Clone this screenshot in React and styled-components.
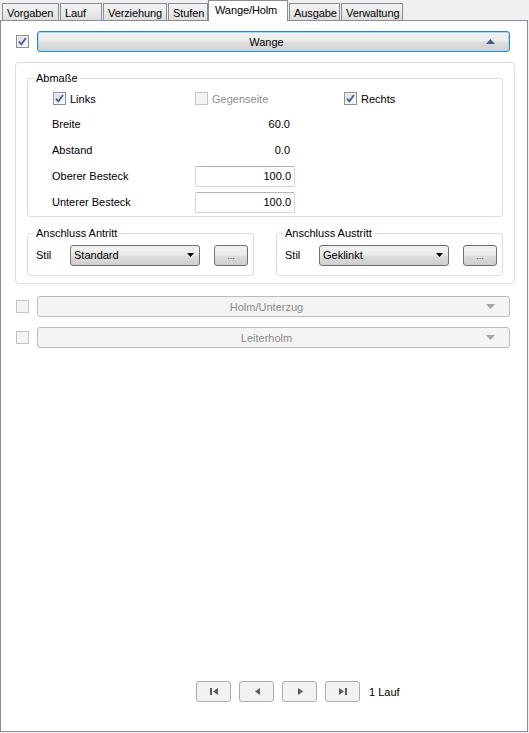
import React from "react";
import styled, { createGlobalStyle } from "styled-components";

const GlobalStyle = createGlobalStyle`
  html, body {
    margin: 0;
    padding: 0;
    background: #f0f0f0;
  }
  body {
    font-family: "Liberation Sans", Arial, sans-serif;
    font-size: 11px;
    color: #000;
  }
`;

const Window = styled.div`
  width: 529px;
  height: 733px;
  display: flex;
  flex-direction: column;
  background: #f0f0f0;
`;

const TabStrip = styled.div`
  display: flex;
  align-items: flex-end;
  height: 20px;
  padding-left: 2px;
  position: relative;
  z-index: 1;
`;

const Tab = styled.div`
  box-sizing: border-box;
  width: ${(p) => p.$w}px;
  height: ${(p) => (p.$active ? 21 : 17)}px;
  margin-left: ${(p) => (p.$gap ? 1 : 0)}px;
  margin-bottom: ${(p) => (p.$active ? -1 : 0)}px;
  border: 1px solid #898c95;
  border-bottom: none;
  background: ${(p) =>
    p.$active ? "#fff" : "linear-gradient(#f3f3f3 0%, #ebebeb 50%, #dedede 100%)"};
  display: flex;
  align-items: ${(p) => (p.$active ? "flex-start" : "center")};
  padding-top: ${(p) => (p.$active ? 3 : 1)}px;
  padding-left: ${(p) => (p.$active ? 6 : 4)}px;
  white-space: nowrap;
  overflow: hidden;
  font-size: 11px;
  letter-spacing: -0.1px;
`;

const Panel = styled.div`
  box-sizing: border-box;
  width: 528px;
  height: 712px;
  background: #fff;
  border: 1px solid #898c95;
  display: flex;
  flex-direction: column;
`;

const SectionRow = styled.div`
  display: flex;
  align-items: center;
  gap: 8px;
  margin: ${(p) => p.$top}px 17px 0 15px;
`;

const Box = styled.span`
  box-sizing: border-box;
  width: 13px;
  height: 13px;
  flex: none;
  border: 1px solid ${(p) => (p.$disabled ? "#c4c4c4" : "#8e8f8f")};
  background: ${(p) =>
    p.$disabled ? "#f4f4f4" : "linear-gradient(135deg, #d4d6da 0%, #f0f0f0 60%, #fbfbfb 100%)"};
  box-shadow: inset 0 0 0 1px #f4f4f4;
  display: flex;
  align-items: center;
  justify-content: center;
  margin-left: ${(p) => p.$ml || 0}px;
`;

const SectionButton = styled.div`
  box-sizing: border-box;
  flex: 1;
  height: 21px;
  border-radius: 3px;
  display: grid;
  grid-template-columns: 1fr auto 1fr;
  align-items: center;
  padding-right: 14px;
  border: 1px solid ${(p) => (p.$active ? "#3c7fb1" : "#b9bcbf")};
  background: ${(p) =>
    p.$active
      ? "linear-gradient(#f3f3f3 0%, #ececec 48%, #dedede 52%, #d2d2d2 100%)"
      : "#f4f4f4"};
  box-shadow: ${(p) => (p.$active ? "inset 0 0 0 1px #a3dcf8" : "none")};
  color: ${(p) => (p.$active ? "#000" : "#8a8a8a")};

  span {
    grid-column: 2;
  }
  svg {
    grid-column: 3;
    justify-self: end;
  }
`;

const Group = styled.div`
  box-sizing: border-box;
  width: 500px;
  margin: 10px 0 0 14px;
  border: 1px solid #d5dfe5;
  border-radius: 4px;
  padding: 9px 0 7px 11px;
`;

const Field = styled.fieldset`
  box-sizing: border-box;
  width: ${(p) => p.$w}px;
  margin: 0;
  padding: 0 0 ${(p) => p.$pb}px 0;
  border: 1px solid #d5dfe5;
  border-radius: 3px;
  min-width: 0;

  legend {
    margin-left: 6px;
    padding: 0 2px;
    line-height: 13px;
    font-size: 11px;
  }
`;

const MeasureGrid = styled.div`
  display: grid;
  grid-template-columns: 143px 149px 1fr;
  grid-auto-rows: 26px;
  align-items: center;
  padding-left: 24px;
`;

const Check = styled.label`
  display: flex;
  align-items: center;
  gap: 4px;
  padding-top: 1px;
  color: ${(p) => (p.$disabled ? "#8d8d8d" : "#000")};
`;

const Value = styled.div`
  width: 100px;
  text-align: right;
  padding-right: 5px;
  box-sizing: border-box;
`;

const NumInput = styled.input`
  box-sizing: border-box;
  width: 100px;
  height: 21px;
  border: 1px solid #d4d6db;
  border-top-color: #b2b5bc;
  border-radius: 2px;
  font: inherit;
  text-align: right;
  padding: 0 3px 0 0;
  color: #000;
  outline: none;
`;

const JoinRow = styled.div`
  display: flex;
  gap: 22px;
  margin-top: 10px;
`;

const StyleLine = styled.div`
  display: flex;
  align-items: center;
  height: 22px;
  padding: 4px 0 0 8px;
`;

const StyleLabel = styled.span`
  width: 34px;
  flex: none;
`;

const Combo = styled.div`
  box-sizing: border-box;
  width: 130px;
  height: 21px;
  border: 1px solid #707070;
  border-radius: 3px;
  background: linear-gradient(#f2f2f2 0%, #ebebeb 48%, #dddddd 52%, #cfcfcf 100%);
  display: flex;
  align-items: center;
  justify-content: space-between;
  padding: 0 5px 0 3px;
`;

const DotsButton = styled.div`
  box-sizing: border-box;
  width: 34px;
  height: 21px;
  margin-left: 14px;
  border: 1px solid #707070;
  border-radius: 3px;
  background: linear-gradient(#f2f2f2 0%, #ebebeb 48%, #dddddd 52%, #cfcfcf 100%);
  display: flex;
  align-items: center;
  justify-content: center;
  font-size: 9px;
  color: #333;
  padding-top: 1px;
`;

const Nav = styled.div`
  margin-top: auto;
  display: flex;
  align-items: center;
  gap: 8px;
  padding: 0 0 29px 195px;
`;

const NavButton = styled.div`
  box-sizing: border-box;
  width: 35px;
  height: 21px;
  border: 1px solid #adadad;
  border-radius: 3px;
  background: #f2f2f2;
  display: flex;
  align-items: center;
  justify-content: center;
`;

const NavLabel = styled.span`
  margin-left: 1px;
`;

const tabs = [
  { label: "Vorgaben", w: 57 },
  { label: "Lauf", w: 42 },
  { label: "Verziehung", w: 64 },
  { label: "Stufen", w: 40 },
  { label: "Wange/Holm", w: 80, active: true },
  { label: "Ausgabe", w: 51 },
  { label: "Verwaltung", w: 62 },
];

function CheckBox({ checked, disabled, ml }) {
  return (
    <Box $disabled={disabled} $ml={ml}>
      {checked && (
        <svg width="9" height="9" viewBox="0 0 9 9">
          <path d="M1 4.6 L3.4 7.4 L8 1" fill="none" stroke="#4b5d95" strokeWidth="1.8" />
        </svg>
      )}
    </Box>
  );
}

function Arrow({ up, color }) {
  return (
    <svg width="9" height="5" viewBox="0 0 9 5">
      <path d={up ? "M0 5 L4.5 0 L9 5 Z" : "M0 0 L9 0 L4.5 5 Z"} fill={color} />
    </svg>
  );
}

function Section({ title, top, active, checked }) {
  return (
    <SectionRow $top={top}>
      <CheckBox checked={checked} disabled={!active} />
      <SectionButton $active={active}>
        <span>{title}</span>
        <Arrow up={active} color={active ? "#3f5f86" : "#a5a5a5"} />
      </SectionButton>
    </SectionRow>
  );
}

function JoinBox({ legend, value }) {
  return (
    <Field $w={227} $pb={9}>
      <legend>{legend}</legend>
      <StyleLine>
        <StyleLabel>Stil</StyleLabel>
        <Combo>
          <span>{value}</span>
          <svg width="7" height="4" viewBox="0 0 7 4">
            <path d="M0 0 L7 0 L3.5 4 Z" fill="#000" />
          </svg>
        </Combo>
        <DotsButton>...</DotsButton>
      </StyleLine>
    </Field>
  );
}

const navIcons = [
  "M1 1 H3 V8 H1 Z M9 1 V8 L4 4.5 Z",
  "M8 1 V8 L3 4.5 Z",
  "M3 1 V8 L8 4.5 Z",
  "M1 1 V8 L6 4.5 Z M7 1 H9 V8 H7 Z",
];

export default function App() {
  return (
    <Window>
      <GlobalStyle />
      <TabStrip>
        {tabs.map((t, i) => (
          <Tab key={t.label} $w={t.w} $active={t.active} $gap={i > 0 && !t.active}>
            {t.label}
          </Tab>
        ))}
      </TabStrip>
      <Panel>
        <Section title="Wange" top={10} active checked />
        <Group>
          <Field $w={476} $pb={1}>
            <legend>Abmaße</legend>
            <MeasureGrid>
              <Check>
                <CheckBox checked ml={1} />
                Links
              </Check>
              <Check $disabled>
                <CheckBox disabled />
                Gegenseite
              </Check>
              <Check>
                <CheckBox checked />
                Rechts
              </Check>

              <span>Breite</span>
              <Value>60.0</Value>
              <span />

              <span>Abstand</span>
              <Value>0.0</Value>
              <span />

              <span>Oberer Besteck</span>
              <NumInput defaultValue="100.0" />
              <span />

              <span>Unterer Besteck</span>
              <NumInput defaultValue="100.0" />
              <span />
            </MeasureGrid>
          </Field>
          <JoinRow>
            <JoinBox legend="Anschluss Antritt" value="Standard" />
            <JoinBox legend="Anschluss Austritt" value="Geklinkt" />
          </JoinRow>
        </Group>
        <Section title="Holm/Unterzug" top={12} />
        <Section title="Leiterholm" top={10} />
        <Nav>
          {navIcons.map((d, i) => (
            <NavButton key={i}>
              <svg width="10" height="9" viewBox="0 0 10 9">
                <path d={d} fill="#5b5b5b" />
              </svg>
            </NavButton>
          ))}
          <NavLabel>1 Lauf</NavLabel>
        </Nav>
      </Panel>
    </Window>
  );
}
